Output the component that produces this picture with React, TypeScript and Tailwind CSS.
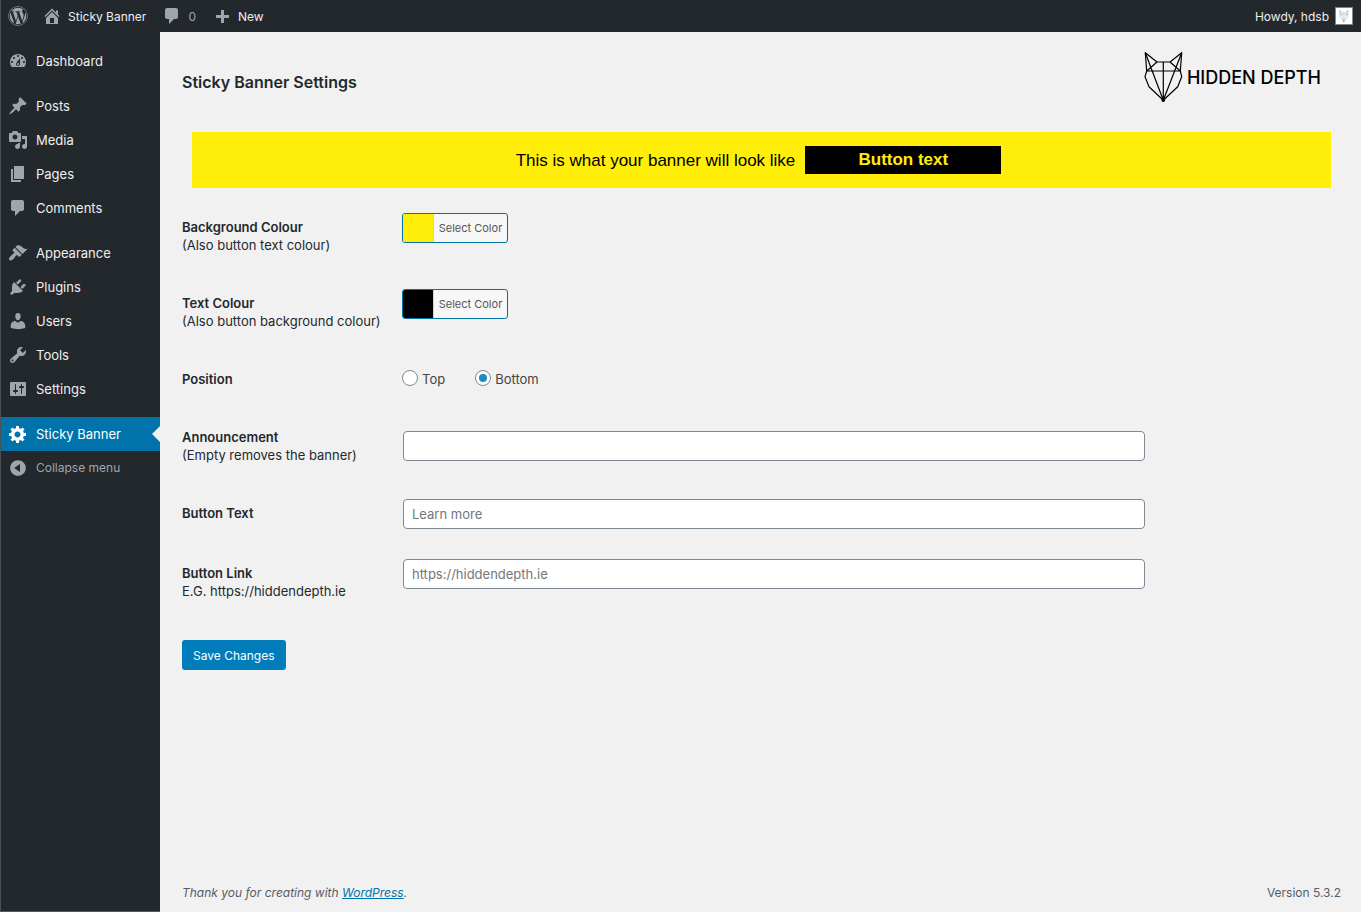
import { useState, type ReactNode } from "react";
import { FaWordpress } from "react-icons/fa";

const icons = {
  dashboard:
    "M3.76 16h12.48c1.1-1.37 1.76-3.11 1.76-5 0-4.42-3.58-8-8-8s-8 3.58-8 8c0 1.89.66 3.63 1.76 5zM10 4c.55 0 1 .45 1 1s-.45 1-1 1-1-.45-1-1 .45-1 1-1zM6 6c.55 0 1 .45 1 1s-.45 1-1 1-1-.45-1-1 .45-1 1-1zm8 0c.55 0 1 .45 1 1s-.45 1-1 1-1-.45-1-1 .45-1 1-1zm-5.37 5.55L12 7v6c0 1.1-.9 2-2 2s-2-.9-2-2c0-.57.24-1.08.63-1.45zM4 10c.55 0 1 .45 1 1s-.45 1-1 1-1-.45-1-1 .45-1 1-1zm12 0c.55 0 1 .45 1 1s-.45 1-1 1-1-.45-1-1 .45-1 1-1zm-5 3c0-.55-.45-1-1-1s-1 .45-1 1 .45 1 1 1 1-.45 1-1z",
  post: "M10.44 3.02l1.82-1.82 6.36 6.35-1.83 1.82c-1.05-.68-2.48-.57-3.41.36l-.75.75c-.92.93-1.04 2.35-.35 3.41l-1.83 1.82-2.41-2.41-2.8 2.79c-.42.42-3.38 2.71-3.8 2.29s1.86-3.39 2.28-3.81l2.79-2.79L4.1 9.36l1.83-1.82c1.05.69 2.48.57 3.4-.36l.75-.75c.93-.92 1.05-2.35.36-3.41z",
  media:
    "M13 11V4c0-.55-.45-1-1-1h-1.67L9 1H5L3.67 3H2c-.55 0-1 .45-1 1v7c0 .55.45 1 1 1h10c.55 0 1-.45 1-1zM7 4.5c1.38 0 2.5 1.12 2.5 2.5S8.38 9.5 7 9.5 4.5 8.38 4.5 7 5.62 4.5 7 4.5zM14 6h5v10.5c0 1.38-1.12 2.5-2.5 2.5S14 17.88 14 16.5s1.12-2.5 2.5-2.5c.17 0 .34.02.5.05V9h-3V6zm-4 8.05V13h2v3.5c0 1.38-1.12 2.5-2.5 2.5S7 17.88 7 16.5 8.12 14 9.5 14c.17 0 .34.02.5.05z",
  page: "M6 15V2h10v13H6zm-1 1h8v2H3V5h2v11z",
  comments: "M5 2h9c1.1 0 2 .9 2 2v7c0 1.1-.9 2-2 2h-2l-5 5v-5H5c-1.1 0-2-.9-2-2V4c0-1.1.9-2 2-2z",
  appearance:
    "M14.48 11.06L7.41 3.99l1.5-1.5c.5-.56 2.3-.47 3.51.32 1.21.8 1.43 1.28 2.91 2.1 1.18.64 2.45 1.26 4.45.85zm-.71.71L6.7 4.7 4.93 6.47c-.39.39-.39 1.02 0 1.41l1.06 1.06c.39.39.39 1.03 0 1.42-.6.6-1.43 1.11-2.21 1.69-.35.26-.7.53-1.01.84C1.43 14.23.4 16.08 1.4 17.07c.99 1 2.84-.03 4.18-1.36.31-.31.58-.66.85-1.02.57-.78 1.08-1.61 1.69-2.21.39-.39 1.02-.39 1.41 0l1.06 1.06c.39.39 1.02.39 1.41 0z",
  plugins:
    "M13.11 4.36L9.87 7.6 8 5.73l3.24-3.24c.35-.34 1.05-.2 1.56.32.52.51.66 1.21.31 1.55zm-8 1.77l.91-1.12 9.01 9.01-1.19.84c-.71.71-2.63 1.16-3.82 1.16H6.14L4.9 17.26c-.59.59-1.54.59-2.12 0-.59-.58-.59-1.53 0-2.12l1.24-1.24v-3.88c0-1.13.4-3.19 1.09-3.89zm7.26 3.97l3.24-3.24c.34-.35 1.04-.21 1.55.31.52.51.66 1.21.31 1.55l-3.24 3.25z",
  users:
    "M10 9.25c-2.27 0-2.73-3.44-2.73-3.44C7 4.02 7.82 2 9.97 2c2.16 0 2.98 2.02 2.71 3.81 0 0-.41 3.44-2.68 3.44zm0 2.57L12.72 10c2.39 0 4.52 2.33 4.52 4.53v2.49s-3.65 1.13-7.24 1.13c-3.65 0-7.24-1.13-7.24-1.13v-2.49c0-2.25 1.94-4.48 4.47-4.48z",
  tools:
    "M16.68 9.77c-1.34 1.34-3.3 1.67-4.95.99l-5.41 6.52c-.99.99-2.59.99-3.58 0s-.99-2.59 0-3.57l6.52-5.42c-.68-1.65-.35-3.61.99-4.95 1.28-1.28 3.12-1.62 4.72-1.06l-2.89 2.89 2.82 2.82 2.86-2.87c.53 1.58.18 3.39-1.08 4.65zM3.81 16.21c.4.39 1.04.39 1.43 0 .4-.4.4-1.04 0-1.43-.39-.4-1.03-.4-1.43 0-.39.39-.39 1.03 0 1.43z",
  settings:
    "M18 16V4c0-.55-.45-1-1-1H3c-.55 0-1 .45-1 1v12c0 .55.45 1 1 1h14c.55 0 1-.45 1-1zM8 11h1c.55 0 1 .45 1 1s-.45 1-1 1H8v1.5c0 .28-.22.5-.5.5s-.5-.22-.5-.5V13H6c-.55 0-1-.45-1-1s.45-1 1-1h1V5.500c0-.28.22-.5.5-.5s.5.22.5.5V11zm5-2h-1c-.55 0-1-.45-1-1s.45-1 1-1h1V5.500c0-.28.22-.5.5-.5s.5.22.5.5V7h1c.55 0 1 .45 1 1s-.45 1-1 1h-1v5.500c0 .28-.22.5-.5.5s-.5-.22-.5-.5V9z",
  generic:
    "M18 12h-2.18c-.17.7-.44 1.35-.81 1.93l1.54 1.54-2.1 2.1-1.54-1.54c-.58.36-1.23.63-1.91.79V19H8v-2.18c-.68-.16-1.33-.43-1.91-.79l-1.54 1.54-2.12-2.12 1.54-1.54c-.36-.58-.63-1.23-.79-1.91H1V9.03h2.17c.16-.7.44-1.35.8-1.94L2.43 5.55l2.1-2.1 1.54 1.54c.58-.37 1.24-.64 1.93-.81V2h3v2.18c.68.16 1.33.43 1.91.79l1.54-1.54 2.12 2.12-1.54 1.54c.36.59.64 1.24.8 1.94H18V12zm-8.5 1.5c1.66 0 3-1.34 3-3s-1.34-3-3-3-3 1.34-3 3 1.34 3 3 3z",
  collapse:
    "M10 2.16c4.33 0 7.84 3.51 7.84 7.84s-3.51 7.84-7.84 7.84S2.16 14.33 2.16 10 5.67 2.16 10 2.16zm2 11.72V6.12L6.18 9.97z",
  home: "M16 8.5l1.53 1.53-1.06 1.06L10 4.6l-6.47 6.49-1.06-1.06L10 2.5l4 4v-2h2v4zm-6-2.46l6 5.99V18H4v-5.97zM12 17v-5H8v5h4z",
  plus: "M17 9v3h-5v5H9v-5H4V9h5V4h3v5h5z",
};

type IconName = keyof typeof icons;

function Icon({ name }: { name: IconName }) {
  return (
    <svg viewBox="0 0 20 20" className="size-5 shrink-0" fill="currentColor" fillRule="evenodd" aria-hidden="true">
      <path d={icons[name]} />
    </svg>
  );
}

function Fox({ className }: { className: string }) {
  return (
    <svg viewBox="0 0 42 52" className={className} fill="none" stroke="currentColor" strokeWidth="1.2" strokeLinejoin="round" aria-hidden="true">
      <path d="M2.300 1.700L14 11H27L38.700 1.700L37.300 20L38.700 25.700L34.700 35.700L20.300 49.300L6 35.700L2 25.700L3.700 20Z" />
      <path d="M3.700 20H37.300M3.700 20L14 11M37.300 20L27 11M2.300 1.700L20.300 49.300L38.700 1.700M20.300 11V49.300" />
      <circle cx="20.300" cy="49" r="1.300" fill="currentColor" />
    </svg>
  );
}

const menu: { label: string; icon: IconName }[][] = [
  [{ label: "Dashboard", icon: "dashboard" }],
  [
    { label: "Posts", icon: "post" },
    { label: "Media", icon: "media" },
    { label: "Pages", icon: "page" },
    { label: "Comments", icon: "comments" },
  ],
  [
    { label: "Appearance", icon: "appearance" },
    { label: "Plugins", icon: "plugins" },
    { label: "Users", icon: "users" },
    { label: "Tools", icon: "tools" },
    { label: "Settings", icon: "settings" },
  ],
];

function AdminBar() {
  return (
    <header className="flex h-8 items-center justify-between border-l border-l-[#4b5055] bg-[#23282d] pr-2 pl-[7px] text-xs text-[#eee]">
      <nav className="flex items-center gap-4">
        <a href="#wordpress" aria-label="WordPress" className="text-[#a0a5aa]">
          <FaWordpress className="size-5" />
        </a>
        <a href="#site" className="-ml-0.5 flex items-center gap-1.5">
          <span className="text-[#a0a5aa]"><Icon name="home" /></span>
          <span className="pt-0.5">Sticky Banner</span>
        </a>
        <a href="#comments" className="flex items-center gap-1.5 text-[#a0a5aa]">
          <Icon name="comments" />
          <span className="pt-0.5">0</span>
        </a>
        <a href="#new" className="flex items-center gap-1.5">
          <span className="text-[#a0a5aa]"><Icon name="plus" /></span>
          <span className="pt-0.5">New</span>
        </a>
      </nav>
      <a href="#profile" className="flex items-center gap-1.5">
        <span className="pt-0.5">Howdy, hdsb</span>
        <span className="flex size-[18px] items-center justify-center border border-[#82878c] bg-white text-gray-500">
          <Fox className="h-3 w-2.5" />
        </span>
      </a>
    </header>
  );
}

function Sidebar() {
  return (
    <aside className="w-40 shrink-0 border-b border-l border-b-[#55595d] border-l-[#4b5055] bg-[#23282d] pt-3 text-[13px] text-[#eee]">
      <nav>
        {menu.map((group, i) => (
          <ul key={i} className="mb-[11px]">
            {group.map((item) => (
              <li key={item.label}>
                <a href={"#" + item.icon} className="flex h-[34px] items-center gap-2 pl-[7px]">
                  <span className="text-[#a0a5aa]"><Icon name={item.icon} /></span>
                  <span className="pt-0.5">{item.label}</span>
                </a>
              </li>
            ))}
          </ul>
        ))}
        <a href="#sticky-banner" aria-current="page" className="flex h-[34px] items-center gap-2 bg-[#0073aa] pl-[7px] text-white">
          <Icon name="generic" />
          <span className="pt-0.5">Sticky Banner</span>
          <span className="ml-auto border-y-8 border-r-8 border-y-transparent border-r-[#f1f1f1]" />
        </a>
        <button type="button" className="flex h-[34px] w-full items-center gap-2 pl-[7px] text-xs text-[#a0a5aa]">
          <Icon name="collapse" />
          Collapse menu
        </button>
      </nav>
    </aside>
  );
}

function Row({ title, hint, htmlFor, children }: { title: string; hint?: string; htmlFor?: string; children: ReactNode }) {
  const text = (
    <>
      <span className="block font-semibold">{title}</span>
      {hint && <span className="block">{hint}</span>}
    </>
  );
  return (
    <div className="grid grid-cols-[220px_1fr]">
      {htmlFor ? (
        <label htmlFor={htmlFor} className="pt-[15px] leading-[18px]">{text}</label>
      ) : (
        <div className="pt-[15px] leading-[18px]">{text}</div>
      )}
      <div className="pt-2.5">{children}</div>
    </div>
  );
}

function ColorButton({ id, swatch }: { id: string; swatch: string }) {
  return (
    <button id={id} type="button" className="flex h-[30px] w-[106px] overflow-hidden rounded-[3px] border border-[#0071a1] bg-[#f7f7f7] text-[11px] leading-7 text-[#555]">
      <span className={"h-full w-[31px] border-r border-[#ccd0d4] " + swatch} />
      <span className="flex-1 text-center">Select Color</span>
    </button>
  );
}

const inputClass =
  "ml-px block h-[30px] w-[79%] rounded-[4px] border border-[#7e8993] bg-white px-2 text-[13px] text-[#32373c] placeholder:text-[#72777c]";
const radioClass =
  "flex size-4 appearance-none items-center justify-center rounded-full border border-[#7e8993] bg-white checked:before:size-2 checked:before:rounded-full checked:before:bg-[#1e8cbe]";

export default function App() {
  const [position, setPosition] = useState("bottom");
  return (
    <div className="flex min-h-screen flex-col bg-[#f1f1f1] font-['Inter',sans-serif] text-[13px] text-[#23282d]">
      <AdminBar />
      <div className="flex flex-1">
        <Sidebar />
        <div className="flex min-w-0 flex-1 flex-col pr-5 pl-[22px]">
          <main className="flex-1">
            <div className="flex items-center justify-between pt-[19px] pr-5">
              <h1 className="pt-2.5 text-base font-semibold">Sticky Banner Settings</h1>
              <div className="flex items-center gap-0.5 text-black">
                <Fox className="h-[52px] w-[42px]" />
                <span className="pt-0.5 text-lg font-medium">HIDDEN DEPTH</span>
              </div>
            </div>

            <div className="mx-2.5 mt-[29px] flex h-14 items-center justify-center gap-2.5 bg-[#ffee0a] pr-1.5 font-['Liberation_Sans',sans-serif] text-[17px] text-black">
              <p className="pt-0.5">This is what your banner will look like</p>
              <button type="button" className="h-7 w-[196px] bg-black font-bold text-[#ffee0a]">
                Button text
              </button>
            </div>

            <form className="mt-[15px]" onSubmit={(e) => e.preventDefault()}>
              <div className="h-[76px]">
                <Row title="Background Colour" hint="(Also button text colour)" htmlFor="bg">
                  <ColorButton id="bg" swatch="bg-[#ffee0a]" />
                </Row>
              </div>
              <div className="h-[76px]">
                <Row title="Text Colour" hint="(Also button background colour)" htmlFor="fg">
                  <ColorButton id="fg" swatch="bg-black" />
                </Row>
              </div>
              <div className="h-[58px]">
                <Row title="Position">
                  <div role="radiogroup" aria-label="Position" className="flex gap-[30px] pt-1">
                    {["Top", "Bottom"].map((name) => (
                      <label key={name} className="flex items-center gap-1 leading-4 text-[#444]">
                        <input
                          type="radio"
                          name="position"
                          className={radioClass}
                          checked={position === name.toLowerCase()}
                          onChange={() => setPosition(name.toLowerCase())}
                        />
                        <span className="pt-0.5">{name}</span>
                      </label>
                    ))}
                  </div>
                </Row>
              </div>
              <div className="h-[76px]">
                <Row title="Announcement" hint="(Empty removes the banner)" htmlFor="announcement">
                  <div className="pt-2">
                    <input id="announcement" type="text" className={inputClass} />
                  </div>
                </Row>
              </div>
              <div className="h-[60px]">
                <Row title="Button Text" htmlFor="button-text">
                  <input id="button-text" type="text" placeholder="Learn more" className={inputClass} />
                </Row>
              </div>
              <div className="h-[76px]">
                <Row title="Button Link" hint="E.G. https://hiddendepth.ie" htmlFor="button-link">
                  <input id="button-link" type="text" placeholder="https://hiddendepth.ie" className={inputClass} />
                </Row>
              </div>
              <button type="submit" className="mt-[15px] h-[30px] rounded-[3px] bg-[#007cba] px-[11px] pt-0.5 text-xs text-white">
                Save Changes
              </button>
            </form>
          </main>

          <footer className="flex justify-between pb-[11px] text-xs text-[#555d66]">
            <p className="italic">
              Thank you for creating with <a href="#wordpress-org" className="text-[#0073aa] underline">WordPress</a>.
            </p>
            <p>Version 5.3.2</p>
          </footer>
        </div>
      </div>
    </div>
  );
}
